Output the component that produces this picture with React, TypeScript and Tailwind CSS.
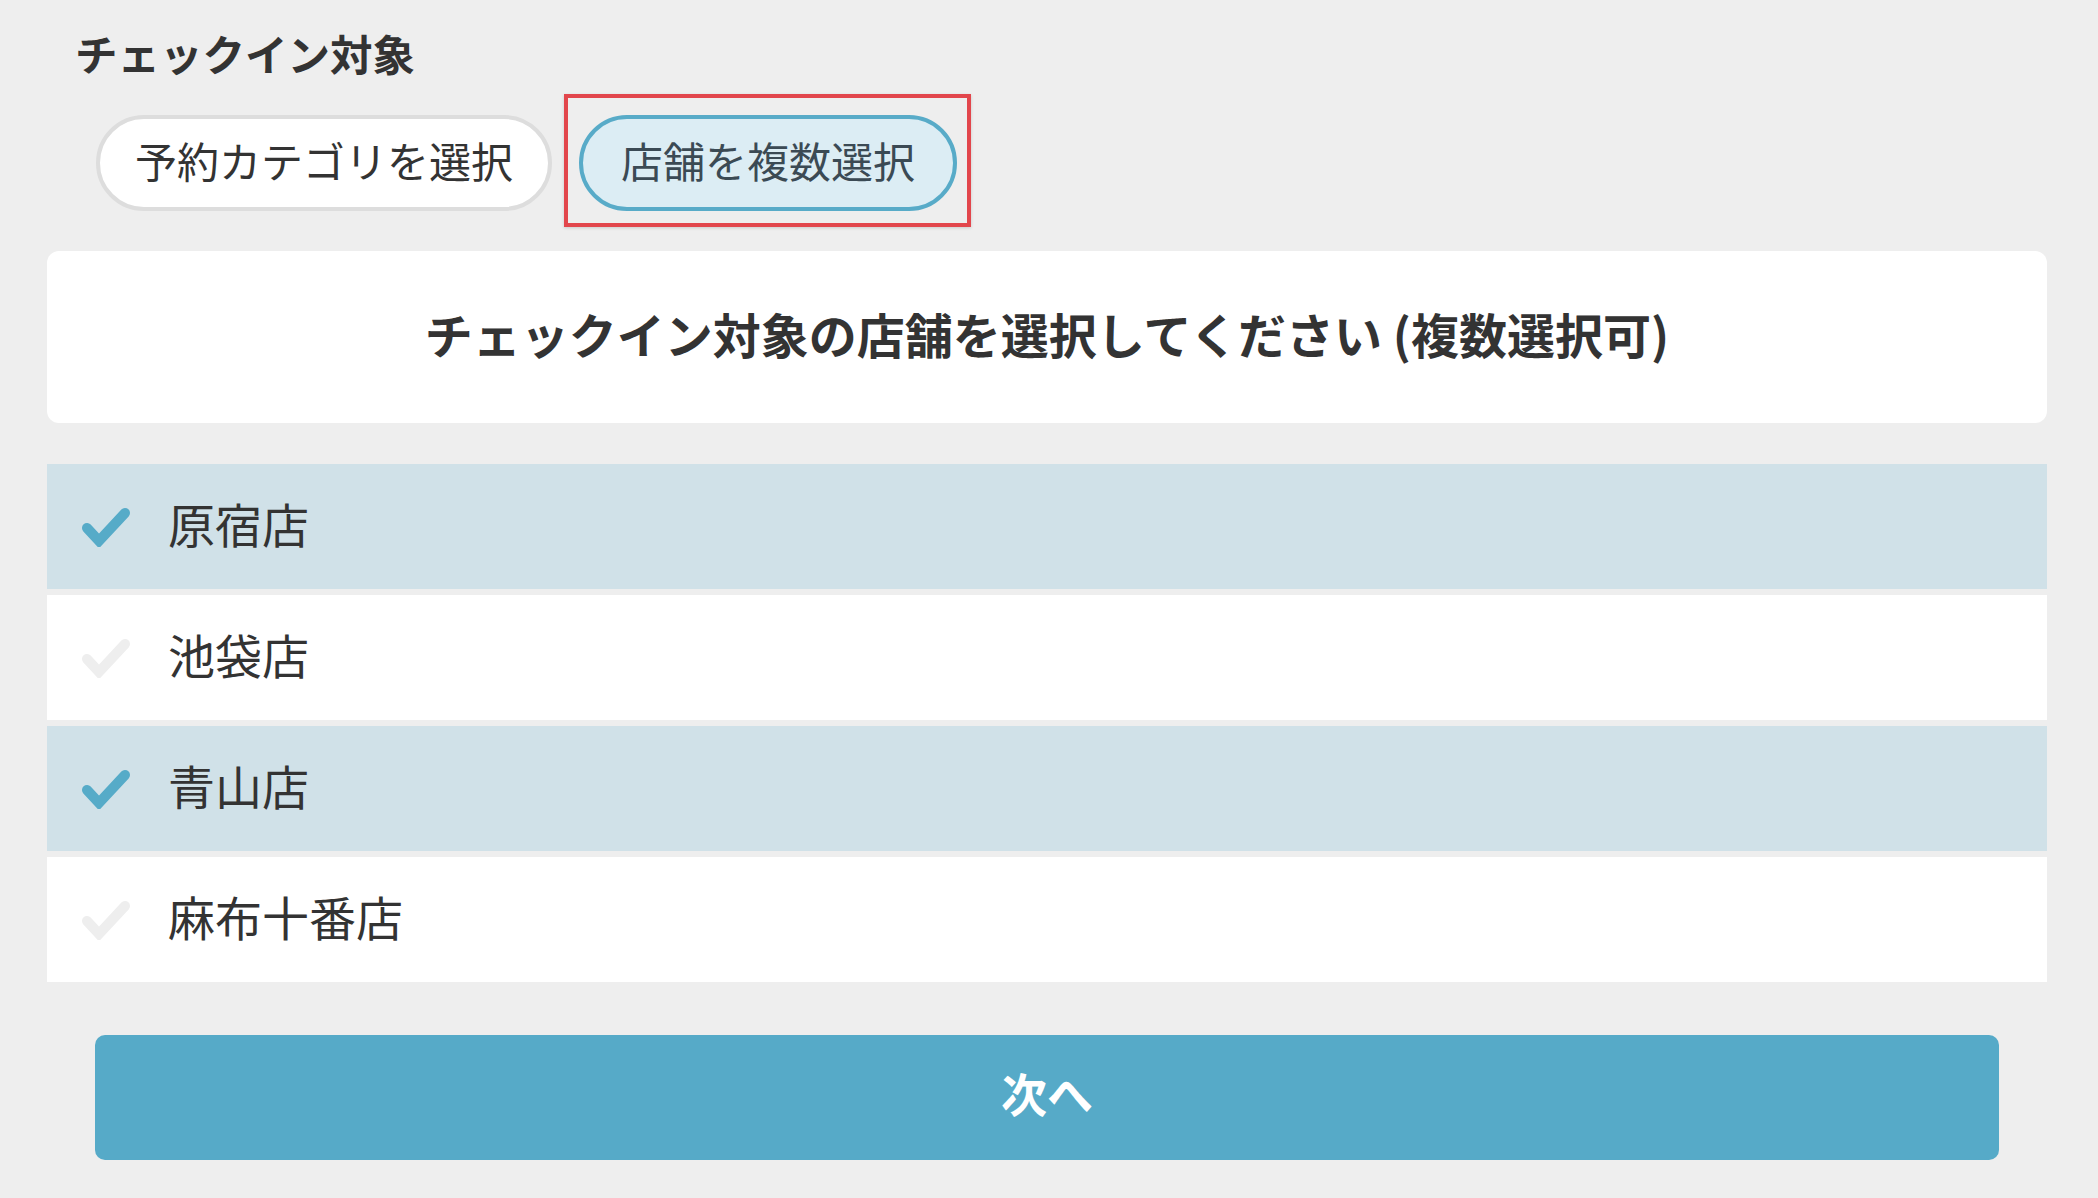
import React, { useState } from "react";

const stores = [
  { id: 1, name: "原宿店", checked: true },
  { id: 2, name: "池袋店", checked: false },
  { id: 3, name: "青山店", checked: true },
  { id: 4, name: "麻布十番店", checked: false },
];

function CheckMark({ active }: { active: boolean }) {
  return (
    <svg width="50" height="40" viewBox="0 0 50 40" className="shrink-0">
      <polyline
        points="6,21 18,34 44,6"
        fill="none"
        stroke={active ? "#56abc8" : "#eeeeee"}
        strokeWidth="10"
        strokeLinecap="round"
        strokeLinejoin="miter"
      />
    </svg>
  );
}

export default function App() {
  const [items, setItems] = useState(stores);

  const toggle = (id: number) =>
    setItems((prev) => prev.map((s) => (s.id === id ? { ...s, checked: !s.checked } : s)));

  return (
    <div
      className="min-h-screen bg-[#eeeeee] pt-[23px] pl-[47px] pr-[51px] pb-10 text-[#333333]"
      style={{ fontFamily: '"Noto Sans CJK JP", "Noto Sans", sans-serif' }}
    >
      <h1 className="pl-[28px] text-[42.5px] font-bold leading-[60px]">チェックイン対象</h1>

      <div className="mt-[32px] flex items-center gap-[27px] pl-[49px]">
        <button className="h-[96px] rounded-full border-4 border-[#dddddd] bg-white px-[35px] pb-[6px] text-[42px] leading-none text-[#333333]">
          予約カテゴリを選択
        </button>
        <div className="relative">
          <button className="h-[96px] rounded-full border-4 border-[#58abc8] bg-[#dcedf4] px-[38px] pb-[6px] text-[42px] leading-none text-[#3b4a54]">
            店舗を複数選択
          </button>
          <div className="pointer-events-none absolute -top-[21px] -bottom-[16px] -left-[15px] -right-[14px] border-4 border-[#e2464c] shadow-[0_1px_3px_rgba(0,0,0,0.15)]" />
        </div>
      </div>

      <div className="mt-[40px] flex h-[172px] items-center justify-center rounded-[12px] bg-white pb-[8px]">
        <p className="text-[48px] font-bold leading-none">
          チェックイン対象の店舗を選択してください (複数選択可)
        </p>
      </div>

      <ul className="mt-[41px] flex flex-col gap-[6px]">
        {items.map((s) => (
          <li
            key={s.id}
            onClick={() => toggle(s.id)}
            className={
              "flex h-[125px] cursor-pointer items-center pl-[34px] " +
              (s.checked ? "bg-[#d0e1e8]" : "bg-white")
            }
          >
            <CheckMark active={s.checked} />
            <span className="ml-[37px] block pb-[9px] text-[47px] leading-none">{s.name}</span>
          </li>
        ))}
      </ul>

      <button className="mx-[48px] mt-[53px] flex h-[125px] w-[calc(100%-96px)] items-center justify-center rounded-[10px] bg-[#56aac8] pb-[10px] text-[46px] font-bold text-white">
        次へ
      </button>
    </div>
  );
}
